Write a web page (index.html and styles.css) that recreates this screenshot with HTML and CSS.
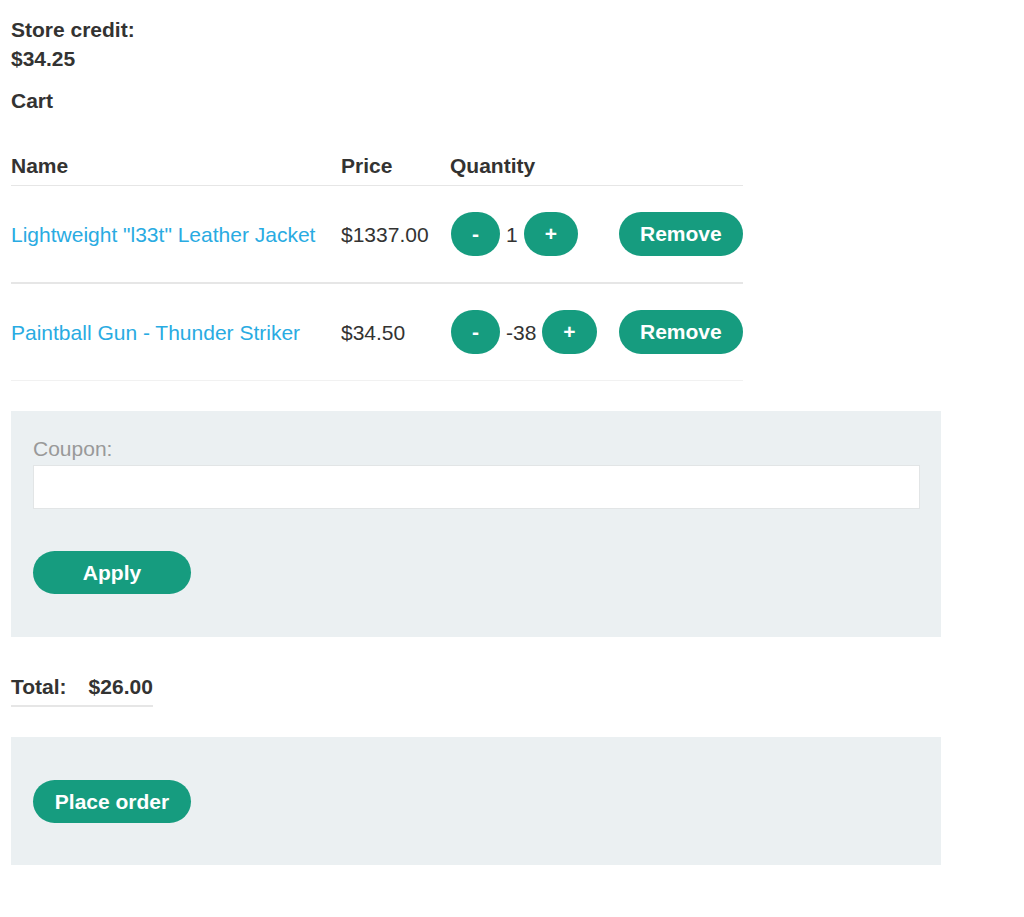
FILE: index.html
```html
<!DOCTYPE html>
<html>
<head>
<meta charset="utf-8">
<link rel="stylesheet" href="styles.css">
</head>
<body>
<div class="page">
  <p class="credit">Store credit:<br>$34.25</p>
  <p class="cart-title">Cart</p>
  <table class="cart">
    <thead>
      <tr><th class="c-name">Name</th><th class="c-price">Price</th><th class="c-qty">Quantity</th><th class="c-rm"></th></tr>
    </thead>
    <tbody>
      <tr class="row1">
        <td><a href="#" class="item">Lightweight "l33t" Leather Jacket</a></td>
        <td>$1337.00</td>
        <td><div class="qty"><button class="btn small">-</button><span>1</span><button class="btn small">+</button></div></td>
        <td><button class="btn small">Remove</button></td>
      </tr>
      <tr class="row2">
        <td><a href="#" class="item">Paintball Gun - Thunder Striker</a></td>
        <td>$34.50</td>
        <td><div class="qty"><button class="btn small">-</button><span>-38</span><button class="btn small">+</button></div></td>
        <td><button class="btn small">Remove</button></td>
      </tr>
    </tbody>
  </table>
  <section class="panel coupon">
    <label class="coupon-label">Coupon:</label>
    <input class="coupon-input" type="text">
    <button class="btn wide">Apply</button>
  </section>
  <div class="total"><span>Total:</span><span>$26.00</span></div>
  <section class="panel order">
    <button class="btn wide">Place order</button>
  </section>
</div>
</body>
</html>
```
FILE: styles.css
```css
html, body {
  margin: 0;
  padding: 0;
  background: #fff;
}
.page {
  padding: 15px 0 40px 11px;
  font-family: "Liberation Sans", Arial, sans-serif;
  font-size: 21px;
  line-height: 29px;
  color: #333332;
}
.credit {
  margin: 0;
  font-weight: bold;
}
.cart-title {
  margin: 13px 0 0;
  font-weight: bold;
}
.cart {
  margin-top: 30px;
  border-collapse: collapse;
  width: 732px;
}
.cart th, .cart td {
  padding: 0;
  text-align: left;
  vertical-align: middle;
  white-space: nowrap;
}
.cart th {
  height: 40px;
  font-weight: bold;
  border-bottom: 1px solid #e6e6e6;
}
.c-name { width: 330px; }
.c-price { width: 109px; }
.c-qty { width: 169px; }
.c-rm { width: 124px; }
.cart td { height: 96px; }
.row1 td { border-bottom: 2px solid #e6e6e6; }
.row2 td { border-bottom: 1px solid #f1f1f1; }
.item {
  color: #29abe2;
  text-decoration: none;
}
.qty {
  display: flex;
  align-items: center;
  gap: 6px;
  padding-left: 1px;
}
.btn {
  display: inline-block;
  vertical-align: middle;
  border: none;
  background: #169c7f;
  color: #fff;
  font-family: "Liberation Sans", Arial, sans-serif;
  font-weight: bold;
  font-size: 21px;
  border-radius: 25px;
  padding: 0 21px;
  margin: 0;
  cursor: pointer;
}
.small {
  height: 44px;
}
.wide {
  height: 43px;
  min-width: 158px;
  padding: 0 20px;
}
.panel {
  background: #ebf0f2;
  width: 908px;
  padding-left: 22px;
  box-sizing: content-box;
}
.coupon {
  margin-top: 30px;
  padding-top: 23px;
  padding-bottom: 43px;
}
.coupon-label {
  display: block;
  color: #999;
  line-height: 29px;
}
.coupon-input {
  display: block;
  margin: 2px 0 42px;
  width: 887px;
  height: 44px;
  box-sizing: border-box;
  border: 1px solid #e2e5e6;
  background: #fff;
  font-size: 21px;
  padding: 0 10px;
}
.total {
  display: inline-flex;
  gap: 22px;
  margin-top: 35px;
  padding-bottom: 4px;
  border-bottom: 2px solid #e6e6e6;
  font-weight: bold;
}
.order {
  margin-top: 30px;
  padding-top: 43px;
  padding-bottom: 42px;
}
```
